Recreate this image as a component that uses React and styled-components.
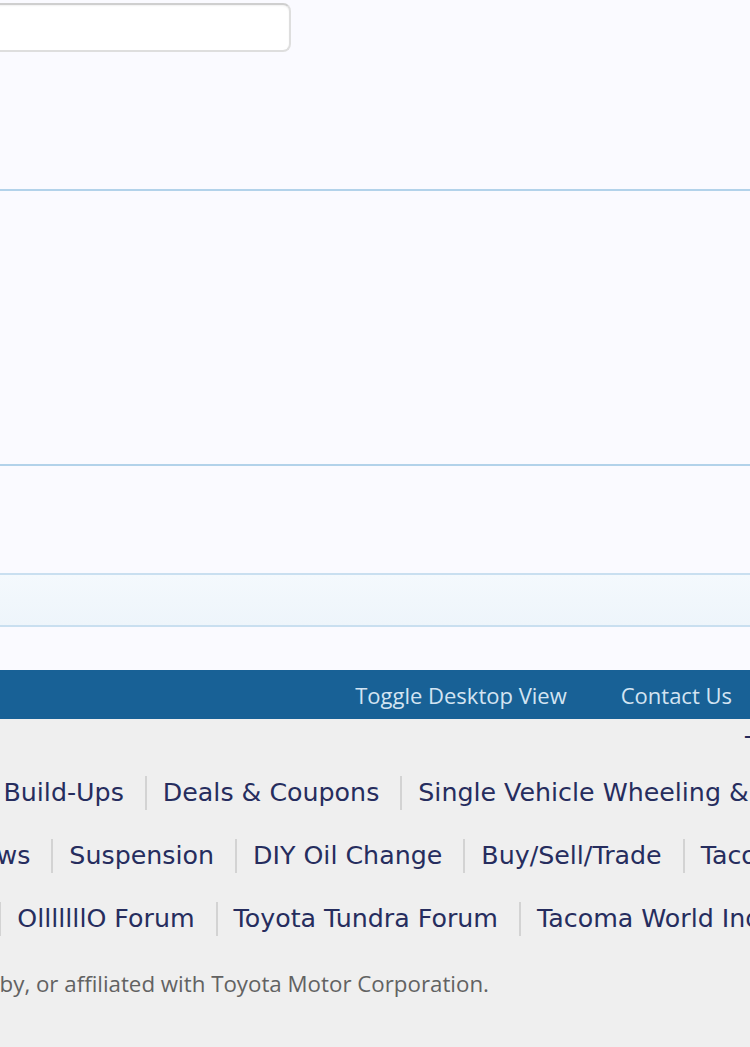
import React from 'react';
import styled, { createGlobalStyle } from 'styled-components';

const GlobalStyle = createGlobalStyle`
  html, body {
    margin: 0;
    padding: 0;
    background: #fafaff;
    overflow: hidden;
  }
`

const Page = styled.div`
  width: 750px;
  height: 1047px;
  overflow: hidden;
  display: flex;
  flex-direction: column;
`

const SearchArea = styled.div`
  height: 189px;
  padding-top: 3px;
  box-sizing: border-box;
`

const SearchInput = styled.div`
  width: 320px;
  height: 49px;
  margin-left: -29px;
  box-sizing: border-box;
  background: #ffffff;
  border: 2px solid #dedede;
  border-top-color: #cfcfcf;
  border-radius: 8px;
  box-shadow: inset 0 1px 2px rgba(0, 0, 0, 0.06);
`

const Section = styled.div`
  height: ${p => p.$height}px;
  border-top: 2px solid #b2d2ea;
  box-sizing: border-box;
`

const Band = styled.div`
  height: 54px;
  box-sizing: border-box;
  border-top: 2px solid #c9dff0;
  border-bottom: 2px solid #c9dff0;
  background: linear-gradient(to bottom, #f4f9fd, #eef5fb);
`

const Spacer = styled.div`
  height: ${p => p.$height}px;
`

const FooterBar = styled.div`
  height: 49px;
  background: #186196;
  display: flex;
  align-items: center;
  justify-content: flex-end;
  gap: 54px;
  padding-right: 18px;
  font-family: 'Open Sans', 'Noto Sans', sans-serif;
  font-size: 22px;
  color: #d3e4f2;
`

const BarLink = styled.span`
  white-space: nowrap;
`

const Lower = styled.div`
  flex: 1;
  background: #efefef;
  padding-top: 12px;
  font-family: 'DejaVu Sans', Verdana, sans-serif;
`

const RightText = styled.div`
  height: 30px;
  line-height: 30px;
  padding-left: 745px;
  font-size: 25px;
  color: #252a5a;
  white-space: nowrap;
`

const LinkRow = styled.div`
  display: flex;
  align-items: center;
  height: 63px;
  margin-left: ${p => p.$offset}px;
  white-space: nowrap;
  font-size: 25.3px;
  color: #262d5e;
`

const LinkItem = styled.span`
  display: flex;
  align-items: center;
  &::before {
    content: '';
    display: ${p => (p.$first ? 'none' : 'block')};
    width: 2px;
    height: 34px;
    margin: 0 16px 0 21px;
    background: #d3d3d3;
  }
`

const Disclaimer = styled.div`
  margin-top: 18px;
  margin-left: ${p => p.$offset}px;
  white-space: nowrap;
  font-family: 'Open Sans', 'Noto Sans', sans-serif;
  font-size: 22.3px;
  color: #626262;
`

const rows = [
  { offset: -139, items: ['Reviews', 'Build-Ups', 'Deals & Coupons', 'Single Vehicle Wheeling & Camping'] },
  { offset: -38, items: ['News', 'Suspension', 'DIY Oil Change', 'Buy/Sell/Trade', 'Tacoma Photos'] },
  { offset: -118, items: ['Tacoma', 'OlllllllO Forum', 'Toyota Tundra Forum', 'Tacoma World Index'] },
];

const App = () => {
  return (
    <Page>
      <GlobalStyle />
      <SearchArea>
        <SearchInput />
      </SearchArea>
      <Section $height={275} />
      <Section $height={109} />
      <Band />
      <Spacer $height={43} />
      <FooterBar>
        <BarLink>Toggle Desktop View</BarLink>
        <BarLink>Contact Us</BarLink>
      </FooterBar>
      <Lower>
        <RightText>Top</RightText>
        {rows.map((row, i) => (
          <LinkRow key={i} $offset={row.offset}>
            {row.items.map((item, j) => (
              <LinkItem key={item} $first={j === 0}>{item}</LinkItem>
            ))}
          </LinkRow>
        ))}
        <Disclaimer $offset={-324}>
          Tacoma World is not endorsed by, or affiliated with Toyota Motor Corporation.
        </Disclaimer>
      </Lower>
    </Page>
  );
};

export default App;
